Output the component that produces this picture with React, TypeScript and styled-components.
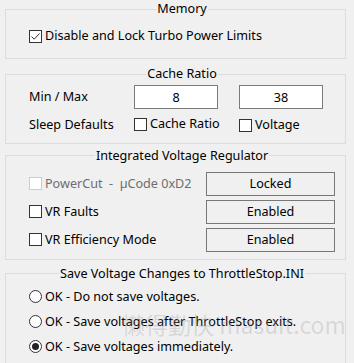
import React from 'react'
import styled, { createGlobalStyle } from 'styled-components'

const GlobalStyle = createGlobalStyle`
  html, body {
    margin: 0;
    padding: 0;
    background: #f0f0f0;
  }
  body {
    font-family: "Noto Sans", "Open Sans", sans-serif;
    font-size: 12.6px;
    color: #000;
  }
`

const Page = styled.div`
  position: relative;
  width: 354px;
  height: 363px;
  overflow: hidden;
  padding: 0 8px 0 5px;
  box-sizing: border-box;
  display: flex;
  flex-direction: column;
`

const Group = styled.fieldset<{ $gap?: number; $top?: number; $bottom?: number; $before?: number }>`
  margin: ${({ $before }) => $before ?? 0}px 0 0 0;
  padding: ${({ $top }) => $top ?? 8}px 10px ${({ $bottom }) => $bottom ?? 8}px 23px;
  border: 1px solid #dcdcdc;
  display: flex;
  flex-direction: column;
  gap: ${({ $gap }) => $gap ?? 0}px;
  min-width: 0;
  flex: none;
`

const Legend = styled.legend`
  margin: 0 auto;
  padding: 0 1px;
  height: 18px;
  line-height: 18px;
`

const Row = styled.div<{ $between?: boolean }>`
  display: flex;
  align-items: center;
  justify-content: ${({ $between }) => ($between ? 'space-between' : 'flex-start')};
`

const Label = styled.label<{ $disabled?: boolean }>`
  display: inline-flex;
  align-items: center;
  gap: 3px;
  height: 16px;
  line-height: 16px;
  white-space: nowrap;
  color: ${({ $disabled }) => ($disabled ? '#6d6d6d' : '#000')};
`

const Box = styled.span<{ $disabled?: boolean }>`
  width: 13px;
  height: 13px;
  box-sizing: border-box;
  border: 1px solid ${({ $disabled }) => ($disabled ? '#cccccc' : '#333333')};
  background: #fff;
  display: inline-flex;
  align-items: center;
  justify-content: center;
  flex: none;
`

const Radio = styled.span`
  width: 13px;
  height: 13px;
  box-sizing: border-box;
  border: 1px solid #333;
  border-radius: 50%;
  background: #fff;
  display: inline-flex;
  align-items: center;
  justify-content: center;
  flex: none;
`

const Dot = styled.span`
  width: 7px;
  height: 7px;
  border-radius: 50%;
  background: #222;
`

const FieldLabel = styled.span`
  width: 105px;
  flex: none;
  line-height: 16px;
`

const Input = styled.div`
  width: 84px;
  height: 24px;
  flex: none;
  box-sizing: border-box;
  border: 1px solid #7a7a7a;
  background: #fff;
  display: flex;
  align-items: center;
  justify-content: center;
  margin-right: 21px;
`

const CheckCell = styled.div`
  width: 105px;
  flex: none;
`

const Button = styled.div`
  width: 129px;
  height: 24px;
  flex: none;
  box-sizing: border-box;
  border: 1px solid #777;
  background: #f0f0f0;
  display: flex;
  align-items: center;
  justify-content: center;
  line-height: 16px;
`

const Watermark = styled.div`
  position: absolute;
  left: 122px;
  top: 313px;
  font-family: "Noto Sans CJK SC", "Noto Sans", sans-serif;
  font-size: 23px;
  line-height: 23px;
  color: rgba(150, 150, 150, 0.28);
  white-space: nowrap;
  pointer-events: none;
`

const Check = ({ checked, disabled }: { checked?: boolean; disabled?: boolean }) => (
  <Box $disabled={disabled}>
    {checked && (
      <svg width="11" height="11" viewBox="0 0 11 11">
        <path d="M1.5 5.5 L4.2 8.2 L9.5 2.5" fill="none" stroke="#333" strokeWidth="1" />
      </svg>
    )}
  </Box>
)

const App = () => (
  <Page>
    <GlobalStyle />
    <Group $top={10} $bottom={14}>
      <Legend>Memory</Legend>
      <Label>
        <Check checked />
        Disable and Lock Turbo Power Limits
      </Label>
    </Group>

    <Group $before={6} $top={2} $bottom={8} $gap={7}>
      <Legend>Cache Ratio</Legend>
      <Row>
        <FieldLabel>Min / Max</FieldLabel>
        <Input>8</Input>
        <Input>38</Input>
      </Row>
      <Row>
        <FieldLabel>Sleep Defaults</FieldLabel>
        <CheckCell>
          <Label>
            <Check />
            Cache Ratio
          </Label>
        </CheckCell>
        <Label>
          <Check />
          Voltage
        </Label>
      </Row>
    </Group>

    <Group $before={3} $top={7} $bottom={7} $gap={4}>
      <Legend>Integrated Voltage Regulator</Legend>
      <Row $between>
        <Label $disabled>
          <Check disabled />
          PowerCut&nbsp; - &nbsp;µCode 0xD2
        </Label>
        <Button>Locked</Button>
      </Row>
      <Row $between>
        <Label>
          <Check />
          VR Faults
        </Label>
        <Button>Enabled</Button>
      </Row>
      <Row $between>
        <Label>
          <Check />
          VR Efficiency Mode
        </Label>
        <Button>Enabled</Button>
      </Row>
    </Group>

    <Group $before={5} $top={6} $bottom={12} $gap={9}>
      <Legend>Save Voltage Changes to ThrottleStop.INI</Legend>
      <Label>
        <Radio />
        OK - Do not save voltages.
      </Label>
      <Label>
        <Radio />
        OK - Save voltages after ThrottleStop exits.
      </Label>
      <Label>
        <Radio>
          <Dot />
        </Radio>
        OK - Save voltages immediately.
      </Label>
    </Group>

    <Watermark>懒得勤快 masuit.com</Watermark>
  </Page>
)

export default App
